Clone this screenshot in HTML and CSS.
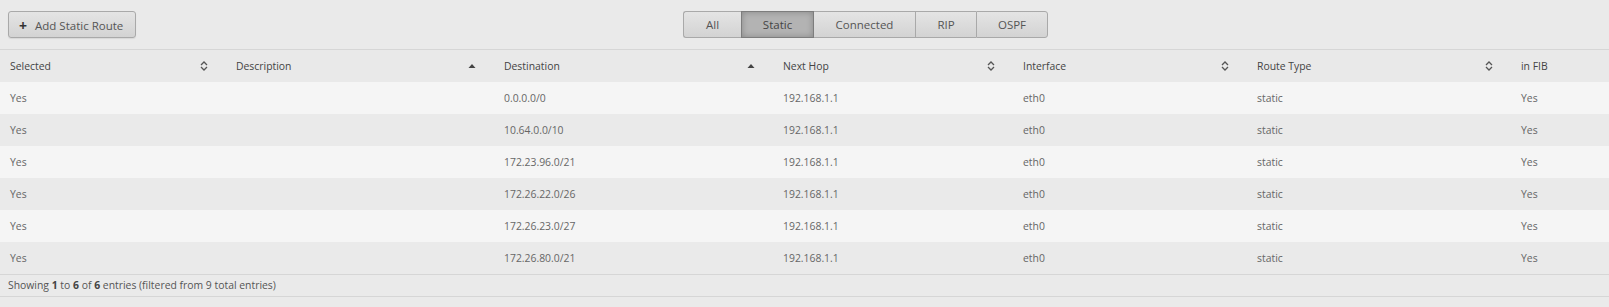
FILE: index.html
```html
<!DOCTYPE html>
<html lang="en">
<head>
    <meta charset="UTF-8" />
    <title>Static Routes</title>
    <link rel="stylesheet" href="styles.css">
</head>
<body>

    <div class="toolbar">
        <button class="btn add"><span class="plus">+</span>Add Static Route</button>
        <div class="filter">
            <button class="seg seg-all">All</button>
            <button class="seg seg-static active">Static</button>
            <button class="seg seg-connected">Connected</button>
            <button class="seg seg-rip">RIP</button>
            <button class="seg seg-ospf">OSPF</button>
        </div>
    </div>

    <table class="routes">
        <thead>
            <tr>
                <th class="c-sel sortable">Selected</th>
                <th class="c-desc sorted">Description</th>
                <th class="c-dest sorted">Destination</th>
                <th class="c-hop sortable">Next Hop</th>
                <th class="c-if sortable">Interface</th>
                <th class="c-type sortable">Route Type</th>
                <th class="c-fib">in FIB</th>
            </tr>
        </thead>
        <tbody>
            <tr><td>Yes</td><td></td><td>0.0.0.0/0</td><td>192.168.1.1</td><td>eth0</td><td>static</td><td>Yes</td></tr>
            <tr><td>Yes</td><td></td><td>10.64.0.0/10</td><td>192.168.1.1</td><td>eth0</td><td>static</td><td>Yes</td></tr>
            <tr><td>Yes</td><td></td><td>172.23.96.0/21</td><td>192.168.1.1</td><td>eth0</td><td>static</td><td>Yes</td></tr>
            <tr><td>Yes</td><td></td><td>172.26.22.0/26</td><td>192.168.1.1</td><td>eth0</td><td>static</td><td>Yes</td></tr>
            <tr><td>Yes</td><td></td><td>172.26.23.0/27</td><td>192.168.1.1</td><td>eth0</td><td>static</td><td>Yes</td></tr>
            <tr><td>Yes</td><td></td><td>172.26.80.0/21</td><td>192.168.1.1</td><td>eth0</td><td>static</td><td>Yes</td></tr>
        </tbody>
    </table>

    <div class="info">Showing <b>1</b> to <b>6</b> of <b>6</b> entries (filtered from 9 total entries)</div>
    <div class="bottom"></div>

</body>
</html>
```

FILE: styles.css
```css
html,
body {
    padding: 0;
    margin: 0;
    height: 100%;
}
body {
    background: #eaeaea;
    font-family: "Open Sans", "Noto Sans", sans-serif;
    font-size: 10.4px;
    color: #666;
}
.toolbar {
    display: flex;
    align-items: center;
    height: 49px;
    padding: 0 8px;
    border-bottom: 1px solid #d6d6d6;
    box-shadow: 0 1px 0 #f4f4f4;
}
.btn,
.seg {
    font-family: inherit;
    font-size: 11.5px;
    color: #555;
    height: 27px;
    background: linear-gradient(#e4e4e4, #d3d3d3);
    border: 1px solid #a9a9a9;
    cursor: pointer;
}
.btn {
    width: 128px;
    padding: 0 0 0 10px;
    border-radius: 3px;
    text-align: left;
    box-shadow: 0 1px 1px rgba(0,0,0,0.08);
}
.plus {
    font-weight: bold;
    font-size: 14px;
    color: #333;
    margin-right: 8px;
    position: relative;
    top: 1px;
}
.filter {
    display: flex;
    margin-left: 547px;
}
.seg {
    padding: 0;
    border-right: none;
    border-radius: 0;
}
.seg:first-child {
    border-radius: 3px 0 0 3px;
}
.seg:last-child {
    border-right: 1px solid #a9a9a9;
    border-radius: 0 3px 3px 0;
}
.seg-all { width: 58px; }
.seg-static { width: 73px; }
.seg-connected { width: 101px; }
.seg-rip { width: 61px; }
.seg-ospf { width: 72px; }
.seg.active {
    background: #b3b3b3;
    border: 1px solid #7d7d7d;
    box-shadow: inset 0 0 6px rgba(0,0,0,0.25);
    color: #444;
}
.seg.active + .seg {
    border-left: none;
}

.routes {
    width: 100%;
    border-collapse: collapse;
    table-layout: fixed;
}
.routes th,
.routes td {
    height: 32px;
    padding: 0 10px;
    text-align: left;
    white-space: nowrap;
}
.routes th {
    font-weight: normal;
    color: #444;
    background: #e9e9e9 no-repeat right 18px center;
}
.routes tbody tr:nth-child(odd) td {
    background: #f5f5f5;
}
.routes tbody tr:nth-child(even) td {
    background: #eaeaea;
}
.c-sel { width: 206px; }
.c-desc { width: 248px; }
.c-dest { width: 259px; }
.c-hop { width: 220px; }
.c-if { width: 214px; }
.c-type { width: 244px; }
.routes th.sortable {
    background-image: url("data:image/svg+xml,%3Csvg xmlns='http://www.w3.org/2000/svg' width='8' height='10' viewBox='0 0 8 10'%3E%3Cpath d='M1 4 L4 1 L7 4 M1 6 L4 9 L7 6' fill='none' stroke='%23555' stroke-width='1.3'/%3E%3C/svg%3E");
}
.routes th.sorted {
    background-image: url("data:image/svg+xml,%3Csvg xmlns='http://www.w3.org/2000/svg' width='8' height='10' viewBox='0 0 8 10'%3E%3Cpath d='M0.5 7 L4 3 L7.5 7 Z' fill='%23444'/%3E%3C/svg%3E");
}

.info {
    height: 21px;
    line-height: 21px;
    padding: 0 8px;
    border-top: 1px solid #d6d6d6;
    border-bottom: 1px solid #d6d6d6;
    color: #555;
}
.info b {
    color: #444;
}
```
